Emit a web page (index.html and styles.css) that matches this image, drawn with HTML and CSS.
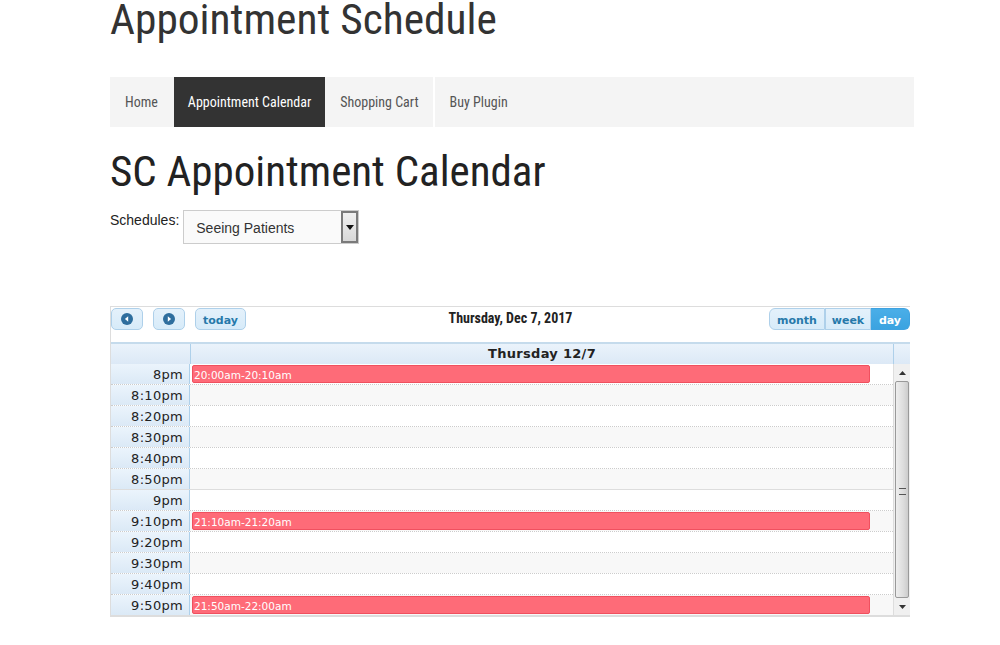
FILE: index.html
```html
<!DOCTYPE html>
<html>
<head>
<meta charset="utf-8">
<link rel="stylesheet" href="styles.css">
</head>
<body>
<div class="page">
  <h1 class="site-title">Appointment Schedule</h1>
  <nav class="nav">
    <a class="nav-item">Home</a>
    <a class="nav-item active">Appointment Calendar</a>
    <a class="nav-item">Shopping Cart</a>
    <a class="nav-item sep">Buy Plugin</a>
  </nav>
  <h2 class="page-title">SC Appointment Calendar</h2>
  <div class="schedules">
    <span class="label">Schedules:</span>
    <div class="select">
      <span class="select-text">Seeing Patients</span>
      <span class="select-arrow"><svg width="8" height="5" viewBox="0 0 8 5"><path d="M0 0H8L4 5Z" fill="#111"/></svg></span>
    </div>
  </div>

  <div class="cal">
    <div class="toolbar">
      <div class="tb-left">
        <span class="btn icon-btn"><svg width="12" height="12" viewBox="0 0 12 12"><circle cx="6" cy="6" r="6" fill="#2e6e9e"/><path d="M7.2 3.3V8.7L3.9 6Z" fill="#fff"/></svg></span>
        <span class="btn icon-btn"><svg width="12" height="12" viewBox="0 0 12 12"><circle cx="6" cy="6" r="6" fill="#2e6e9e"/><path d="M4.8 3.3V8.7L8.1 6Z" fill="#fff"/></svg></span>
        <span class="btn today">today</span>
      </div>
      <div class="tb-title">Thursday, Dec 7, 2017</div>
      <div class="tb-right">
        <span class="btn seg first">month</span><span class="btn seg mid">week</span><span class="btn seg last active">day</span>
      </div>
    </div>
    <div class="head">
      <div class="head-axis"></div>
      <div class="head-day">Thursday 12/7</div>
      <div class="head-gutter"></div>
    </div>
    <div class="body">
      <div class="slots">
        <div class="row hour"><div class="axis">8pm</div><div class="slot"><div class="event">20:00am-20:10am</div></div></div>
        <div class="row alt"><div class="axis">8:10pm</div><div class="slot"></div></div>
        <div class="row"><div class="axis">8:20pm</div><div class="slot"></div></div>
        <div class="row alt"><div class="axis">8:30pm</div><div class="slot"></div></div>
        <div class="row"><div class="axis">8:40pm</div><div class="slot"></div></div>
        <div class="row alt"><div class="axis">8:50pm</div><div class="slot"></div></div>
        <div class="row hour"><div class="axis">9pm</div><div class="slot"></div></div>
        <div class="row alt"><div class="axis">9:10pm</div><div class="slot"><div class="event">21:10am-21:20am</div></div></div>
        <div class="row"><div class="axis">9:20pm</div><div class="slot"></div></div>
        <div class="row alt"><div class="axis">9:30pm</div><div class="slot"></div></div>
        <div class="row"><div class="axis">9:40pm</div><div class="slot"></div></div>
        <div class="row alt"><div class="axis">9:50pm</div><div class="slot"><div class="event">21:50am-22:00am</div></div></div>
      </div>
      <div class="scrollbar">
        <div class="sb-btn"><svg width="7" height="4" viewBox="0 0 7 4"><path d="M0 4H7L3.5 0Z" fill="#333"/></svg></div>
        <div class="sb-track">
          <div class="sb-thumb"><span class="grip"></span></div>
        </div>
        <div class="sb-btn"><svg width="7" height="4" viewBox="0 0 7 4"><path d="M0 0H7L3.5 4Z" fill="#333"/></svg></div>
      </div>
    </div>
  </div>
</div>
</body>
</html>
```

FILE: styles.css
```css
html, body {
  margin: 0;
  padding: 0;
  background: #fff;
}
.page {
  margin-left: 110px;
  width: 804px;
  font-family: "Liberation Sans", Arial, sans-serif;
}
.site-title, .page-title, .nav, .tb-title {
  font-family: "Roboto Condensed", "Liberation Sans Narrow", "Roboto", sans-serif;
}
.site-title {
  margin: -5px 0 0;
  font-size: 43.4px;
  font-weight: 400;
  line-height: 50px;
  color: #333;
  height: 82px;
}
.nav {
  display: flex;
  height: 50px;
  background: #f4f4f4;
}
.nav-item {
  display: flex;
  align-items: center;
  padding: 0 14px 0 15px;
  font-size: 14px;
  color: #555;
}
.nav-item:first-child {
  padding-right: 16px;
}
.nav-item.active {
  background: #333;
  color: #fff;
  padding: 0 14px 0 14px;
}
.nav-item.sep {
  border-left: 2px solid #fff;
}
.page-title {
  margin: 0;
  padding-top: 19px;
  font-size: 43px;
  font-weight: 400;
  line-height: 50px;
  color: #222;
}
.schedules {
  display: flex;
  align-items: flex-start;
  margin-top: 14px;
}
.label {
  font-size: 14px;
  color: #222;
  margin-top: 2px;
  margin-right: 4px;
}
.select {
  width: 174px;
  height: 32px;
  border: 1px solid #ccc;
  background: #fafafa;
  display: flex;
  align-items: center;
  justify-content: space-between;
}
.select-text {
  font-size: 14px;
  color: #333;
  padding-left: 12px;
  padding-top: 1px;
}
.select-arrow {
  width: 13px;
  height: 28px;
  border: 2px solid #7a7a7a;
  background: linear-gradient(#f0f0f0, #d8d8d8);
  display: flex;
  align-items: center;
  justify-content: center;
}
.cal {
  margin-top: 62px;
  width: 799px;
  border-top: 1px solid #ddd;
  border-left: 1px solid #ddd;
  font-family: "DejaVu Sans", Verdana, sans-serif;
}
.toolbar {
  display: flex;
  align-items: flex-start;
  justify-content: space-between;
  height: 35px;
  padding-top: 1px;
  box-sizing: border-box;
}
.tb-left, .tb-right {
  display: flex;
  width: 200px;
}
.tb-right {
  justify-content: flex-end;
}
.btn {
  box-sizing: border-box;
  height: 22px;
  display: flex;
  align-items: center;
  justify-content: center;
  border: 1px solid #aed0ea;
  background: linear-gradient(#e4f1fb, #d7ebf9);
  color: #2779aa;
  font-weight: bold;
  font-size: 11px;
  border-radius: 5px;
}
.icon-btn {
  width: 32px;
  margin-right: 10px;
}
.today {
  width: 51px;
  padding-top: 3px;
}
.tb-title {
  font-weight: bold;
  font-size: 14px;
  color: #222;
  padding-top: 2px;
}
.seg {
  border-radius: 0;
  padding-top: 3px;
  height: 22px;
}
.seg + .seg {
  border-left: none;
}
.seg.first {
  border-radius: 6px 0 0 6px;
  width: 56px;
}
.seg.mid {
  width: 46px;
  border-left: 1px solid #aed0ea;
}
.seg.last {
  border-radius: 0 6px 6px 0;
  width: 39px;
}
.seg.active {
  background: linear-gradient(#4aaee8, #3ba3e0);
  color: #fff;
  border-color: #3fa2e0;
}
.head {
  display: flex;
  height: 20px;
  border-top: 2px solid #c5dbec;
  background: linear-gradient(#eaf3fb, #dce9f6);
}
.head-axis {
  width: 79px;
  border-right: 1px solid #aed0ea;
}
.head-day {
  flex: 1;
  text-align: center;
  font-size: 13px;
  font-weight: bold;
  color: #222;
  line-height: 20px;
  letter-spacing: 0.3px;
  border-right: 1px solid #aed0ea;
}
.head-gutter {
  width: 16px;
}
.body {
  display: flex;
  border-bottom: 2px solid #ddd;
}
.slots {
  flex: 1;
}
.row {
  display: flex;
  height: 21px;
  box-sizing: border-box;
  border-top: 1px dotted #ccc;
}
.row.hour {
  border-top: 1px solid #ddd;
}
.row:first-child {
  border-top: none;
  height: 20px;
}
.axis {
  width: 79px;
  border-right: 1px solid #aed0ea;
  background: linear-gradient(#ebf4fc, #dbe9f6);
  text-align: right;
  padding-right: 6px;
  box-sizing: border-box;
  font-size: 13px;
  line-height: 21px;
  color: #222;
  letter-spacing: 0.3px;
}
.slot {
  flex: 1;
  background: #fff;
  padding-left: 2px;
}
.row.alt .slot {
  background: #f8f8f8;
}
.event {
  width: 678px;
  height: 18px;
  margin-top: 1px;
  box-sizing: border-box;
  background: #fe6b78;
  border: 1px solid #f0505f;
  border-radius: 2px;
  color: #fff;
  font-size: 10.5px;
  line-height: 19px;
  padding-left: 1px;
}
.scrollbar {
  width: 16px;
  display: flex;
  flex-direction: column;
  background: #f0f0f0;
  border-left: 1px solid #ddd;
}
.sb-btn {
  height: 17px;
  display: flex;
  align-items: center;
  justify-content: center;
}
.sb-track {
  flex: 1;
  display: flex;
}
.sb-thumb {
  flex: 1;
  margin: 0 1px;
  border: 1px solid #999;
  border-radius: 2px;
  background: linear-gradient(90deg, #eee, #ddd 60%, #ccc);
  display: flex;
  align-items: center;
  justify-content: center;
}
.grip {
  width: 7px;
  height: 5px;
  border-top: 1px solid #555;
  border-bottom: 1px solid #555;
  position: relative;
  top: 2px;
}
```
